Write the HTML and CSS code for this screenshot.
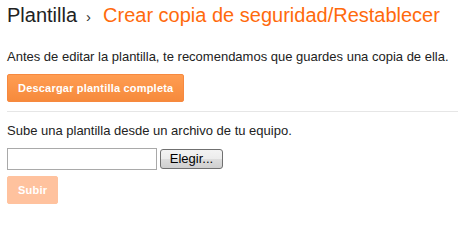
FILE: index.html
```html
<!DOCTYPE html>
<html lang="es">
<head>
<meta charset="utf-8">
<title>Plantilla › Crear copia de seguridad/Restablecer</title>
<link rel="stylesheet" href="styles.css">
</head>
<body>
<div class="page">
  <h1 class="title"><span class="crumb">Plantilla</span><span class="sep">›</span><span class="current">Crear copia de seguridad/Restablecer</span></h1>
  <p class="note">Antes de editar la plantilla, te recomendamos que guardes una copia de ella.</p>
  <button class="btn btn-primary" type="button">Descargar plantilla completa</button>
  <hr class="divider">
  <p class="note note-upload">Sube una plantilla desde un archivo de tu equipo.</p>
  <div class="file-row">
    <span class="file-field"></span>
    <span class="file-choose">Elegir...</span>
  </div>
  <button class="btn btn-primary btn-disabled" type="button" disabled>Subir</button>
</div>
</body>
</html>
```

FILE: styles.css
```css
html, body {
  margin: 0;
  padding: 0;
  background: #fff;
}

.page {
  padding: 0 7px;
  font-family: "Liberation Sans", Arial, sans-serif;
  color: #222;
  display: flex;
  flex-direction: column;
  align-items: flex-start;
}

.title {
  margin: 3px 0 0;
  font-size: 20px;
  line-height: 24px;
  font-weight: normal;
  color: #222;
  white-space: nowrap;
}

.sep {
  font-size: 15px;
  margin: 0 12px 0 9px;
  color: #333;
}

.current {
  color: #ff6a0c;
}

.note {
  margin: 20px 0 0;
  font-size: 13px;
  line-height: 16px;
  color: #222;
}

.btn {
  font-family: "Liberation Sans", Arial, sans-serif;
  font-size: 11px;
  font-weight: bold;
  letter-spacing: 0.2px;
  line-height: 26px;
  height: 28px;
  padding: 0 10px;
  border-radius: 2px;
  color: #fff;
  cursor: pointer;
}

.btn-primary {
  margin-top: 9px;
  border: 1px solid #f7893f;
  background: linear-gradient(#ff9d52, #f68a3c);
}

.divider {
  align-self: stretch;
  margin: 9px -7px 0 0;
  border: 0;
  height: 1px;
  background: #e6e6e6;
}

.note-upload {
  margin-top: 11px;
}

.file-row {
  margin-top: 9px;
  display: flex;
  align-items: center;
  gap: 3px;
}

.file-field {
  display: block;
  box-sizing: border-box;
  width: 150px;
  height: 22px;
  border: 1px solid #a9a9a9;
  background: #fff;
}

.file-choose {
  display: block;
  box-sizing: border-box;
  width: 63px;
  height: 20px;
  border: 1px solid #707070;
  border-radius: 3px;
  background: linear-gradient(#f3f3f3 0%, #ececec 50%, #dddddd 51%, #cfcfcf 100%);
  font-size: 13px;
  line-height: 18px;
  text-align: center;
  color: #000;
}

.btn-disabled {
  margin-top: 6px;
  border-color: #ffc29e;
  background: #ffc29e;
  cursor: default;
}
```
